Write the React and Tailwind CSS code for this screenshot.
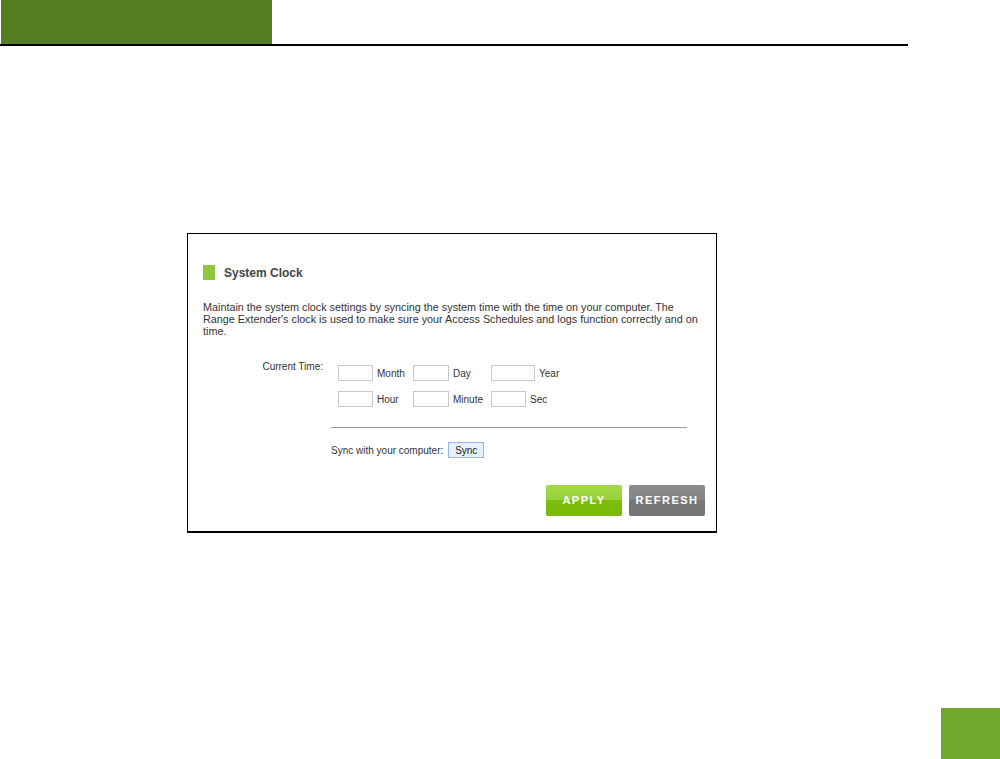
const font = { fontFamily: '"Liberation Sans", Arial, sans-serif' };

const Box = ({ w = 'w-[35px]' }) => (
	<div className={`${w} h-[16px] border border-[#c8c8c8] bg-white`} />
);

const Cell = ({ w, label }) => (
	<div className="flex items-center gap-[4px]">
		<Box w={w} />
		<span className="text-[10px] text-[#333]">{label}</span>
	</div>
);

const App = () => {
	return (
		<div className="w-[1000px] h-[759px] bg-white flex flex-col" style={font}>
			{/* top bar */}
			<div className="w-[908px] h-[46px] border-b-2 border-black">
				<div className="ml-[1px] w-[271px] h-[44px] bg-[#537e22]" />
			</div>

			{/* settings panel */}
			<div className="ml-[187px] mt-[187px] w-[530px] h-[300px] border border-b-2 border-black pl-[15px] pr-[11px] pt-[31px] flex flex-col">
				<div className="flex items-center gap-[9px] h-[15px]">
					<div className="w-[12px] h-[15px] bg-[#8dc63f]" />
					<span className="text-[12px] font-bold text-[#444]">System Clock</span>
				</div>

				<p className="mt-[21px] text-[10.8px] leading-[12px] text-[#333] whitespace-nowrap">
					Maintain the system clock settings by syncing the system time with the time on your computer. The
					<br />
					Range Extender's clock is used to make sure your Access Schedules and logs function correctly and on
					<br />
					time.
				</p>

				<div className="mt-[24px] flex">
					<div className="w-[120px] text-right text-[10px] text-[#333] leading-[12px]">Current Time:</div>
					<div className="ml-[15px] mt-[4px] flex flex-col gap-[10px]">
						<div className="grid grid-cols-[75px_78px_auto]">
							<Cell label="Month" />
							<Cell w="w-[36px]" label="Day" />
							<Cell w="w-[44px]" label="Year" />
						</div>
						<div className="grid grid-cols-[75px_78px_auto]">
							<Cell label="Hour" />
							<Cell w="w-[36px]" label="Minute" />
							<Cell label="Sec" />
						</div>
					</div>
				</div>

				<div className="ml-[128px] mt-[20px] w-[356px] border-t border-[#9a9a9a]" />

				<div className="ml-[128px] mt-[14px] flex items-center gap-[5px]">
					<span className="text-[10px] text-[#333]">Sync with your computer:</span>
					<div className="w-[36px] h-[16px] border border-[#92b8e2] bg-[#e8f1fb] flex items-center justify-center text-[10px] text-[#222]">
						Sync
					</div>
				</div>

				<div className="mt-[27px] flex justify-end gap-[7px]">
					<button className="w-[76px] h-[31px] rounded-[2px] bg-[linear-gradient(#a2da48_0%,#96d13a_50%,#7dbd0b_50%,#7aba08_100%)] text-white text-[11px] font-bold tracking-[1.5px]">
						APPLY
					</button>
					<button className="w-[76px] h-[31px] rounded-[2px] bg-[linear-gradient(#8c8c8c_0%,#848484_50%,#777777_50%,#747474_100%)] text-white text-[11px] font-bold tracking-[1.5px]">
						REFRESH
					</button>
				</div>
			</div>

			{/* page tab */}
			<div className="mt-auto flex justify-end">
				<div className="w-[59px] h-[51px] bg-[#6fa82d]" />
			</div>
		</div>
	);
};

export default App;
